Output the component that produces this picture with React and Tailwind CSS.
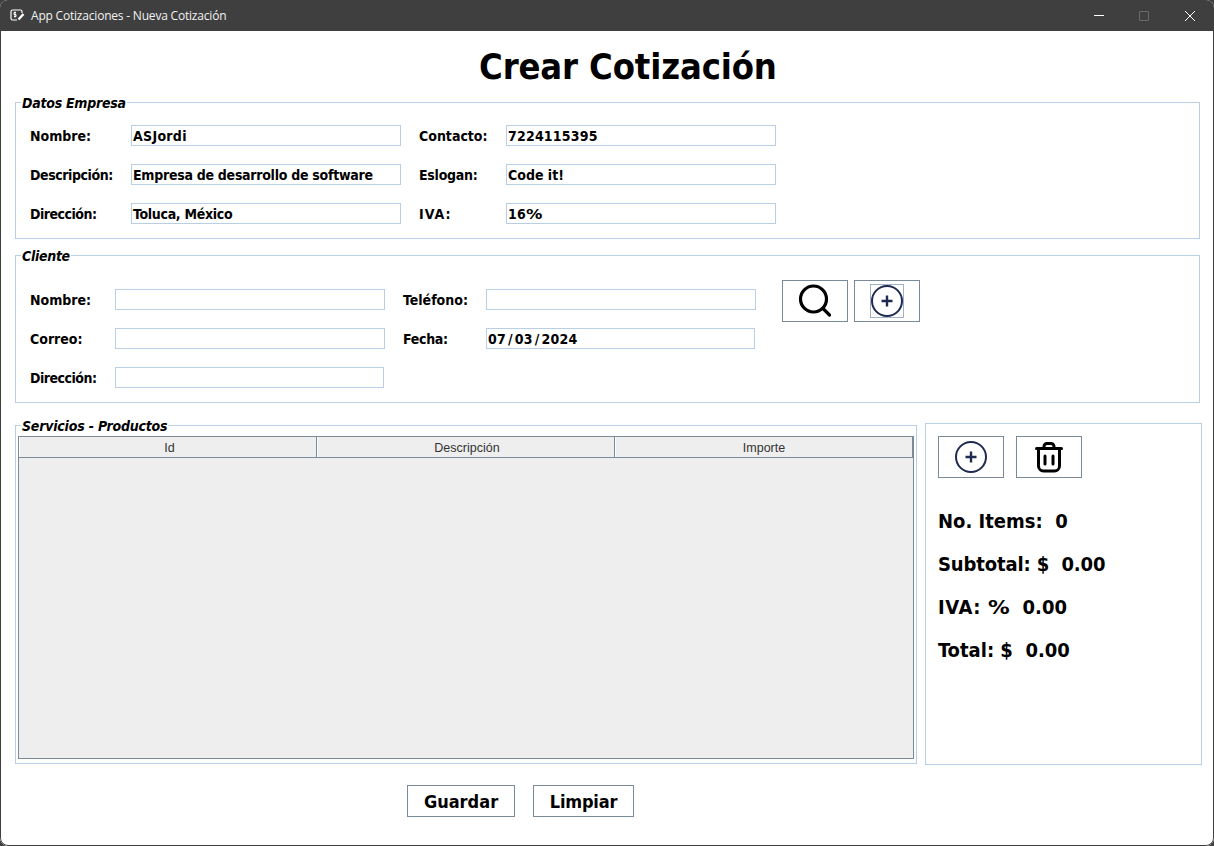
import React from 'react';

const font = "font-['DejaVu_Sans_Condensed','DejaVu_Sans',sans-serif]";

function Field({ label, labelW, value, inputW = 'w-[270px]', labelClass = '', valueClass = '' }) {
  return (
    <div className="flex items-center h-[21px]">
      <span className={`${labelW} ${labelClass} shrink-0 pt-[2px] text-[14px] font-bold text-black`}>{label}</span>
      <div className={`${inputW} ${valueClass} h-[21px] shrink-0 border border-[#b8cfe5] px-[1px] flex items-center text-[14px] font-bold text-black leading-none`}>
        {value}
      </div>
    </div>
  );
}

function Legend({ children, className = '' }) {
  return (
    <span className={`${className} absolute left-[5px] top-[-7px] bg-white pl-[1px] pr-[1px] text-[14px] leading-[15px] font-bold italic text-black`}>
      {children}
    </span>
  );
}

function IconBtn({ children }) {
  return (
    <div className="w-[66px] h-[42px] border border-[#7a8a99] flex items-center justify-center">
      {children}
    </div>
  );
}

function PlusCircle() {
  return (
    <svg width="32" height="32" viewBox="0 0 32 32" fill="none" stroke="#1f2a50">
      <circle cx="16" cy="16" r="15" strokeWidth="2" />
      <path d="M16 10.500v11M10.500 16h11" strokeWidth="2.400" />
    </svg>
  );
}

function Search() {
  return (
    <svg width="34" height="34" viewBox="0 0 34 34" fill="none" stroke="#000" strokeWidth="3.200" strokeLinecap="round">
      <circle cx="15.500" cy="15" r="13" />
      <path d="M25 24.500 L31.500 31" />
    </svg>
  );
}

function Trash() {
  return (
    <svg width="28" height="31" viewBox="0 0 28 31" fill="none" stroke="#000" strokeWidth="3" strokeLinecap="round" strokeLinejoin="round">
      <path d="M1.500 6.500h25" />
      <path d="M9 6V4.500a3 3 0 0 1 3-3h4a3 3 0 0 1 3 3V6" />
      <path d="M3.500 7v17a5 5 0 0 0 5 5h11a5 5 0 0 0 5-5V7" />
      <path d="M10 14v8M18 14v8" />
    </svg>
  );
}

function HeaderCell({ children, className }) {
  return (
    <div className={`${className} h-full flex items-center justify-center border-l border-l-white border-r border-r-[#7a8a99] pt-[2px] font-['Liberation_Sans',sans-serif] text-[12.500px] text-[#333333]`}>
      {children}
    </div>
  );
}

export default function App() {
  return (
    <div className={`${font} w-[1214px] h-[846px] bg-[#3f3f3f] overflow-hidden`}>
      <div className="h-full rounded-lg overflow-hidden flex flex-col bg-white">
        {/* title bar */}
        <div className="h-[31px] shrink-0 bg-[#3f3f3f] flex items-center pl-[10px] text-white">
          <svg width="15" height="13" viewBox="0 0 15 13" fill="none" stroke="#fff" strokeWidth="1.200">
            <path d="M7 11H2.500A1.500 1.500 0 0 1 1 9.500v-7A1.500 1.500 0 0 1 2.500 1h8A1.500 1.500 0 0 1 12 2.500V4" />
            <path d="M6 3.500H4v2h2v2H4M5 2.500v6" strokeWidth="1" />
            <path d="M8.500 10.500l5-5.500" strokeWidth="2.400" />
          </svg>
          <span className="ml-[6px] font-['Open_Sans',sans-serif] text-[12px] tracking-[-0.2px] text-[#f2f2f2]">App Cotizaciones - Nueva Cotización</span>
          <div className="ml-auto flex items-center pr-[19px]">
            <div className="w-[10px] h-[1px] bg-white" />
            <div className="ml-[35px] w-[10px] h-[10px] rounded-[1px] border border-[#6b6b6b]" />
            <svg className="ml-[36px]" width="10" height="10" viewBox="0 0 10 10" stroke="#fff" strokeWidth="1">
              <path d="M0 0l10 10M10 0L0 10" />
            </svg>
          </div>
        </div>

        {/* body */}
        <div className="flex-1 flex flex-col border-x border-b border-[#3f3f3f] rounded-b-lg pl-[14px]">
          <h1 className="h-[71px] shrink-0 pl-[464px] flex items-center text-[36px] tracking-[-0.12px] font-bold text-black">Crear Cotización</h1>

          <div className="relative w-[1185px] h-[137px] border border-[#b8cfe5] pl-[14px] pt-[22px] flex flex-col gap-[18px]">
            <Legend className="tracking-[-0.25px]">Datos Empresa</Legend>
            <div className="flex gap-[18px]">
              <Field label="Nombre:" labelW="w-[101px]" value="ASJordi" valueClass="tracking-[0.3px]" />
              <Field label="Contacto:" labelW="w-[87px]" value="7224115395" valueClass="tracking-[0.2px]" />
            </div>
            <div className="flex gap-[18px]">
              <Field label="Descripción:" labelW="w-[101px]" labelClass="tracking-[-0.42px]" value="Empresa de desarrollo de software" valueClass="tracking-[-0.27px]" />
              <Field label="Eslogan:" labelW="w-[87px]" labelClass="tracking-[-0.25px]" value="Code it!" />
            </div>
            <div className="flex gap-[18px]">
              <Field label="Dirección:" labelW="w-[101px]" labelClass="tracking-[-0.5px]" value="Toluca, México" valueClass="tracking-[-0.3px]" />
              <Field
                label="IVA:"
                labelW="w-[87px]"
                labelClass="tracking-[1px]"
                value={<span>16<span className="inline-block origin-left scale-x-[1.3]">%</span></span>}
                valueClass="tracking-[0.2px]"
              />
            </div>
          </div>

          <div className="relative mt-[16px] w-[1185px] h-[148px] border border-[#b8cfe5] pl-[14px] pt-[33px] flex">
            <Legend className="tracking-[-0.3px]">Cliente</Legend>
            <div className="flex flex-col gap-[18px]">
              <div className="flex gap-[18px]">
                <Field label="Nombre:" labelW="w-[85px]" value="" />
                <Field label="Teléfono:" labelW="w-[83px]" value="" />
              </div>
              <div className="flex gap-[18px]">
                <Field label="Correo:" labelW="w-[85px]" value="" />
                <Field
                  label="Fecha:"
                  labelW="w-[83px]"
                  labelClass="tracking-[-0.3px]"
                  value={<span>07<span className="mx-[2px]">/</span>03<span className="mx-[2px]">/</span>2024</span>}
                  inputW="w-[269px]"
                  valueClass="tracking-[0.2px]"
                />
              </div>
              <Field label="Dirección:" labelW="w-[85px]" labelClass="tracking-[-0.5px]" value="" inputW="w-[269px]" />
            </div>
            <div className="ml-[26px] mt-[-9px] flex gap-[6px]">
              <IconBtn><Search /></IconBtn>
              <IconBtn>
                <div className="w-[34px] h-[34px] border border-[#9fb2c8] flex items-center justify-center">
                  <PlusCircle />
                </div>
              </IconBtn>
            </div>
          </div>

          <div className="flex mt-[20px] h-[342px]">
            <div className="relative mt-[2px] w-[902px] h-[339px] border border-[#b8cfe5] pl-[2px] pr-[2px] pt-[10px] pb-[4px]">
              <Legend className="tracking-[-0.2px]">Servicios - Productos</Legend>
              <div className="h-full border border-[#7a8a99] bg-[#eeeeee] flex flex-col">
                <div className="h-[21px] shrink-0 flex border-b border-[#7a8a99]">
                  <HeaderCell className="w-[298px] pl-[3px]">Id</HeaderCell>
                  <HeaderCell className="w-[298px] pl-[2px]">Descripción</HeaderCell>
                  <HeaderCell className="flex-1">Importe</HeaderCell>
                </div>
              </div>
            </div>
            <div className="ml-[8px] w-[277px] h-[342px] border border-[#b8cfe5] pl-[12px] pt-[12px]">
              <div className="flex gap-[12px]">
                <IconBtn><PlusCircle /></IconBtn>
                <IconBtn><Trash /></IconBtn>
              </div>
              <div className="mt-[22px] flex flex-col text-[20px] font-bold leading-[43px] text-black whitespace-pre">
                <span>No. Items:  0</span>
                <span className="tracking-[-0.12px]">Subtotal: $  0.00</span>
                <span>
                  <span className="tracking-[0.6px]">IVA: </span>
                  <span className="inline-block origin-left scale-x-[1.2] mr-[4px]">%</span>
                  <span>  0.00</span>
                </span>
                <span>Total: $  0.00</span>
              </div>
            </div>
          </div>

          <div className="mt-[20px] pl-[392px] flex gap-[18px]">
            <div className="w-[108px] h-[32px] border border-[#7a8a99] flex items-center justify-center text-[18px] font-bold text-black">Guardar</div>
            <div className="w-[101px] h-[32px] border border-[#7a8a99] flex items-center justify-center text-[18px] tracking-[-0.2px] font-bold text-black">Limpiar</div>
          </div>
        </div>
      </div>
    </div>
  );
}
